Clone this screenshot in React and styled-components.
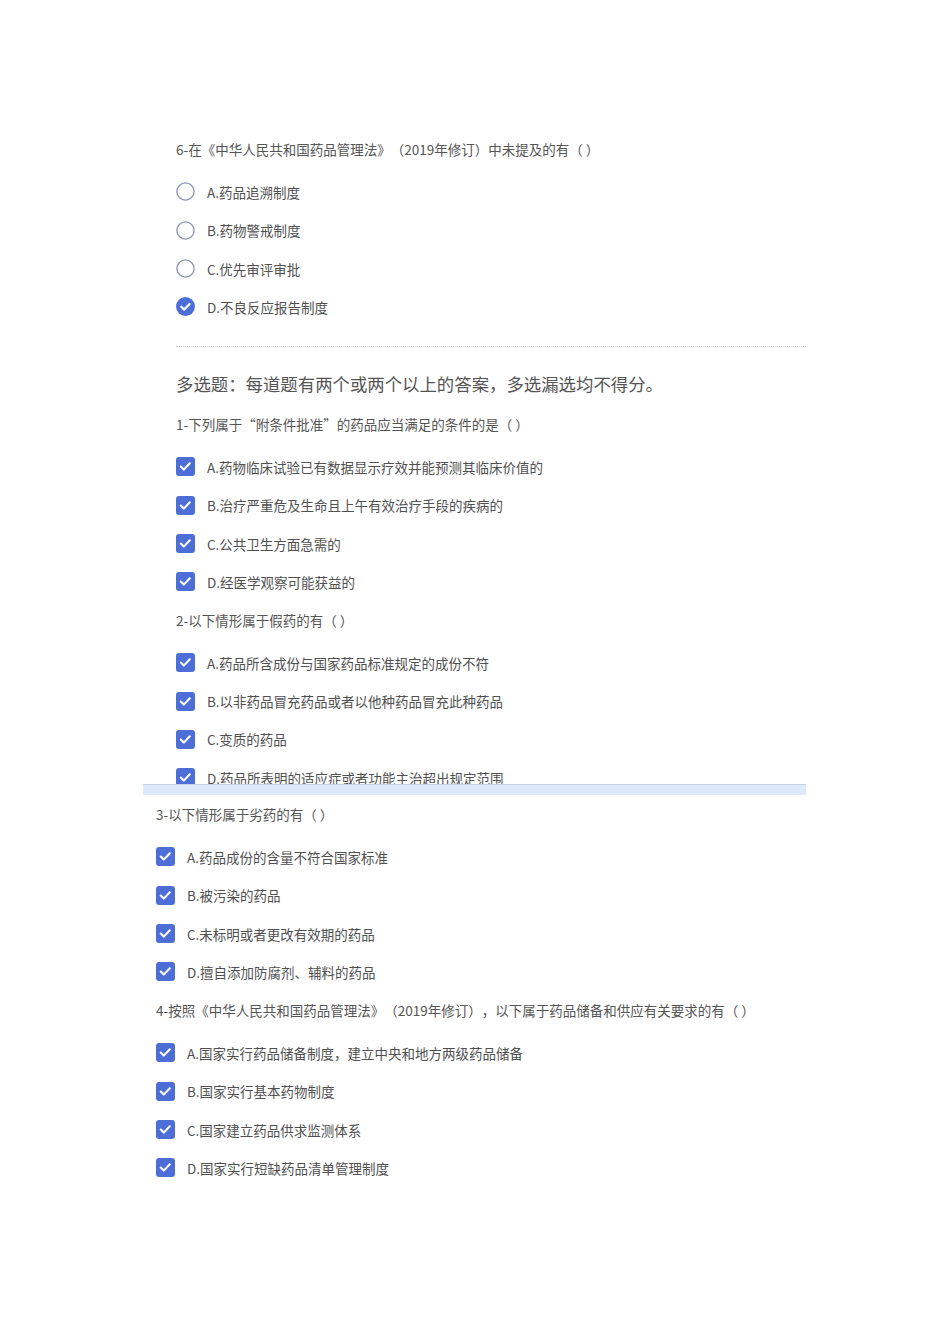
import styled, { createGlobalStyle } from "styled-components";

const GlobalStyle = createGlobalStyle`
  html, body {
    margin: 0;
    padding: 0;
    background: #fff;
  }
  body {
    font-family: "Noto Sans CJK SC", "Noto Sans", "Liberation Sans", sans-serif;
    color: #4a4a4a;
    text-spacing-trim: space-all;
  }
`;

const singleQuestion = {
  title: "6-在《中华人民共和国药品管理法》（2019年修订）中未提及的有（ ）",
  options: [
    { text: "A.药品追溯制度", checked: false },
    { text: "B.药物警戒制度", checked: false },
    { text: "C.优先审评审批", checked: false },
    { text: "D.不良反应报告制度", checked: true },
  ],
};

const topQuestions = [
  {
    title: "1-下列属于“附条件批准”的药品应当满足的条件的是（ ）",
    options: [
      "A.药物临床试验已有数据显示疗效并能预测其临床价值的",
      "B.治疗严重危及生命且上午有效治疗手段的疾病的",
      "C.公共卫生方面急需的",
      "D.经医学观察可能获益的",
    ],
  },
  {
    title: "2-以下情形属于假药的有（ ）",
    options: [
      "A.药品所含成份与国家药品标准规定的成份不符",
      "B.以非药品冒充药品或者以他种药品冒充此种药品",
      "C.变质的药品",
      "D.药品所表明的适应症或者功能主治超出规定范围",
    ],
  },
];

const bottomQuestions = [
  {
    title: "3-以下情形属于劣药的有（ ）",
    options: [
      "A.药品成份的含量不符合国家标准",
      "B.被污染的药品",
      "C.未标明或者更改有效期的药品",
      "D.擅自添加防腐剂、辅料的药品",
    ],
  },
  {
    title:
      "4-按照《中华人民共和国药品管理法》（2019年修订），以下属于药品储备和供应有关要求的有（ ）",
    options: [
      "A.国家实行药品储备制度，建立中央和地方两级药品储备",
      "B.国家实行基本药物制度",
      "C.国家建立药品供求监测体系",
      "D.国家实行短缺药品清单管理制度",
    ],
  },
];

function RadioIcon({ checked }) {
  if (checked) {
    return (
      <svg width="19" height="19" viewBox="0 0 19 19">
        <circle cx="9.5" cy="9.5" r="9.5" fill="#4d6ed6" />
        <path
          d="M5.3 9.7l2.9 2.9 5.4-5.6"
          fill="none"
          stroke="#fff"
          strokeWidth="2.2"
          strokeLinecap="round"
          strokeLinejoin="round"
        />
      </svg>
    );
  }
  return (
    <svg width="19" height="19" viewBox="0 0 19 19">
      <circle cx="9.5" cy="9.5" r="8.6" fill="#fff" stroke="#8d97b5" strokeWidth="1.4" />
    </svg>
  );
}

function CheckIcon() {
  return (
    <svg width="19" height="19" viewBox="0 0 19 19">
      <rect x="0" y="0" width="19" height="19" rx="3" fill="#4d6ed6" />
      <path
        d="M4.8 9.6l3 3 6-6.3"
        fill="none"
        stroke="#fff"
        strokeWidth="2.1"
        strokeLinecap="round"
        strokeLinejoin="round"
      />
    </svg>
  );
}

function Question({ title, children }) {
  return (
    <QuestionBlock>
      <QuestionTitle>{title}</QuestionTitle>
      <OptionList>{children}</OptionList>
    </QuestionBlock>
  );
}

function CheckQuestion({ q }) {
  return (
    <Question title={q.title}>
      {q.options.map((text) => (
        <OptionRow key={text}>
          <IconBox>
            <CheckIcon />
          </IconBox>
          <OptionText>{text}</OptionText>
        </OptionRow>
      ))}
    </Question>
  );
}

export default function App() {
  return (
    <>
      <GlobalStyle />
      <Page>
        <TopPanel>
          <Question title={singleQuestion.title}>
            {singleQuestion.options.map((o) => (
              <OptionRow key={o.text}>
                <IconBox>
                  <RadioIcon checked={o.checked} />
                </IconBox>
                <OptionText>{o.text}</OptionText>
              </OptionRow>
            ))}
          </Question>
          <Divider />
          <SectionHeading>多选题：每道题有两个或两个以上的答案，多选漏选均不得分。</SectionHeading>
          {topQuestions.map((q) => (
            <CheckQuestion key={q.title} q={q} />
          ))}
        </TopPanel>
        <BottomPanel>
          <SeamBar />
          <BottomContent>
            {bottomQuestions.map((q) => (
              <CheckQuestion key={q.title} q={q} />
            ))}
          </BottomContent>
        </BottomPanel>
      </Page>
    </>
  );
}

const Page = styled.div`
  width: 950px;
  min-height: 1344px;
  padding-top: 139px;
  box-sizing: border-box;
`;

const TopPanel = styled.div`
  display: flex;
  flex-direction: column;
  margin-left: 176px;
  width: 630px;
  height: 645px;
  overflow: hidden;
`;

const QuestionBlock = styled.div`
  display: flex;
  flex-direction: column;
  flex-shrink: 0;
  margin-bottom: 8.8px;
`;

const QuestionTitle = styled.div`
  font-size: 13.5px;
  line-height: 20px;
  height: 20px;
  color: #555;
  white-space: nowrap;
  margin-bottom: 13.8px;
`;

const OptionList = styled.div`
  display: flex;
  flex-direction: column;
`;

const OptionRow = styled.div`
  display: flex;
  align-items: center;
  height: 38.33px;
  flex-shrink: 0;
`;

const IconBox = styled.span`
  display: flex;
  width: 19px;
  height: 19px;
  margin-right: 12px;
  flex-shrink: 0;
`;

const OptionText = styled.span`
  font-size: 13.5px;
  line-height: 20px;
  color: #505050;
  white-space: nowrap;
`;

const Divider = styled.div`
  flex-shrink: 0;
  margin-top: 11px;
  border-top: 1px dotted #c8c8c8;
  height: 0;
`;

const SectionHeading = styled.div`
  flex-shrink: 0;
  margin-top: 25px;
  margin-bottom: 18px;
  font-size: 17.4px;
  line-height: 24px;
  height: 24px;
  color: #555;
  white-space: nowrap;
`;

const BottomPanel = styled.div`
  margin-left: 143px;
  width: 663px;
`;

const SeamBar = styled.div`
  height: 10px;
  background: #dceaf9;
  border-top: 1px solid #c5d3e3;
`;

const BottomContent = styled.div`
  display: flex;
  flex-direction: column;
  padding: 9px 0 0 13px;
`;
